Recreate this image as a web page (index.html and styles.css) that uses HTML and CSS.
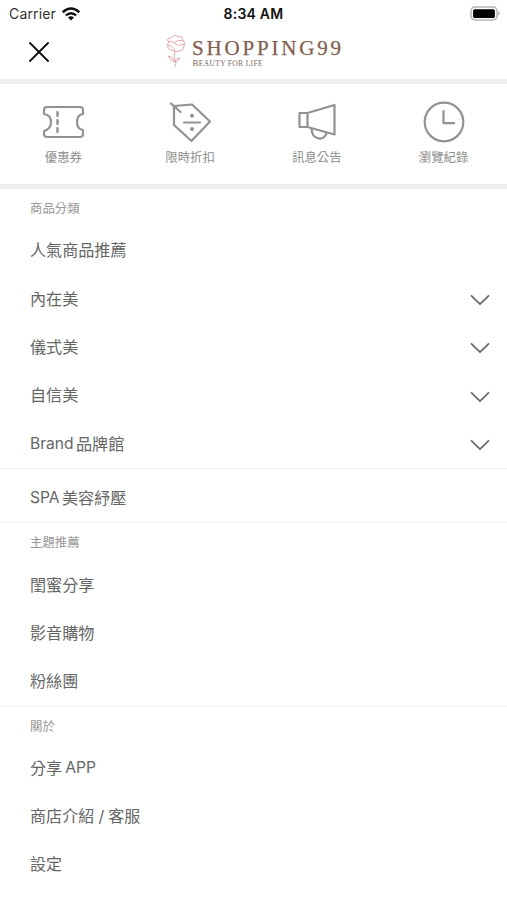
FILE: index.html
```html
<!DOCTYPE html>
<html lang="zh-Hant">
<head>
<meta charset="utf-8">
<title>SHOPPING99</title>
<link rel="stylesheet" href="styles.css">
</head>
<body>
<div class="status">
  <div class="carrier"><span>Carrier</span>
    <svg width="20" height="16" viewBox="0 0 20 16" fill="none" stroke="#111" stroke-width="2.5"><path d="M1.7 6.2Q10-1.2 18.3 6.2M4.9 9.4Q10 5 15.1 9.4"/><path d="M7 11.4Q10 8.9 13 11.4L10 14.4Z" fill="#111" stroke="none"/></svg>
  </div>
  <div class="time">8:34 AM</div>
  <svg class="battery" width="32" height="16" viewBox="0 0 32 16"><rect x="1" y="1.1" width="26" height="12.8" rx="3.8" fill="#fff" stroke="#b5b5b5" stroke-width="1.5"/><rect x="3.1" y="3.2" width="21.8" height="8.8" rx="1.5" fill="#000"/><path d="M28.4 5.3Q31 7.4 28.4 9.5Z" fill="#999"/></svg>
</div>
<header class="header">
  <svg class="close" width="20" height="20" viewBox="0 0 20 20" fill="none" stroke="#111" stroke-width="1.9" stroke-linecap="round"><path d="M1 1L19 19M19 1L1 19"/></svg>
  <svg class="logo" width="180" height="38" viewBox="0 0 180 38">
    <g fill="none" stroke="#e0a0a3" stroke-width=".9" stroke-linejoin="round" stroke-linecap="round">
      <path d="M3 8Q0 6 3 4Q6 5 7 2Q10 0 12 3Q17 1 16 5Q20 8 18 12Q18 16 14 17Q9 19 5 16Q1 15 2 11Q0 10 3 8Z"/>
      <path d="M3 8Q6 6 8 9Q12 5 17 7M2 11Q8 12 9 17M8 9Q12 13 18 10"/>
      <path d="M9 18Q7 22 9 26Q11 29 9 33M9 28Q7 23 2 22Q4 27 9 28M9 27Q10 24 14 24Q13 27 9 28"/>
    </g>
    <text class="logo-name" x="26" y="20.6" textLength="149">SHOPPING99</text>
    <text class="logo-tag" x="26.5" y="32" textLength="70"><tspan class="logo-cap">B</tspan>EAUTY FOR LIFE</text>
  </svg>
</header>
<nav class="shortcuts">
  <a class="shortcut"><svg width="44" height="44" viewBox="0 0 44 44"><path d="M6 7H39Q42 7 42 10V14Q36 15 36 22Q36 29 42 30V34Q42 37 39 37H6Q3 37 3 34V31Q10 29 10 22Q10 15 3 14V10Q3 7 6 7Z"/><path class="perforation" d="M16.5 12.5V15.5M16.5 20.5V23.5M16.5 28.5V31.5"/></svg><span>優惠券</span></a>
  <a class="shortcut"><svg width="44" height="44" viewBox="0 0 44 44"><path d="M6 6L24 4.5L42 21.5L23.5 41L6 25ZM3 3.5L12.5 12"/><path d="M16 22.5H32"/><g class="dots"><circle cx="24" cy="15.8" r="2"/><circle cx="24" cy="29" r="2"/></g></svg><span>限時折扣</span></a>
  <a class="shortcut"><svg width="44" height="44" viewBox="0 0 44 44"><path d="M4.5 13H12.5V27H4.5ZM12.5 13L39.5 5V34.5L12.5 27M16.5 28.5C17 41 30 41 31.5 33"/></svg><span>訊息公告</span></a>
  <a class="shortcut"><svg width="44" height="44" viewBox="0 0 44 44"><circle cx="22" cy="22" r="19.3"/><path d="M21.5 11V23.2H32"/></svg><span>瀏覽紀錄</span></a>
</nav>
<main class="menu">
  <section class="group">
    <h2 class="label">商品分類</h2>
    <a class="row">人氣商品推薦</a>
    <a class="row">內在美<svg class="chev" width="20" height="12" viewBox="0 0 20 12"><path d="M1 1.3L10 10L19 1.3"/></svg></a>
    <a class="row">儀式美<svg class="chev" width="20" height="12" viewBox="0 0 20 12"><path d="M1 1.3L10 10L19 1.3"/></svg></a>
    <a class="row">自信美<svg class="chev" width="20" height="12" viewBox="0 0 20 12"><path d="M1 1.3L10 10L19 1.3"/></svg></a>
    <a class="row"><span class="latin brand">Brand</span>品牌館<svg class="chev" width="20" height="12" viewBox="0 0 20 12"><path d="M1 1.3L10 10L19 1.3"/></svg></a>
  </section>
  <section class="group single">
    <a class="row"><span class="latin spa">SPA</span>美容紓壓</a>
  </section>
  <section class="group">
    <h2 class="label">主題推薦</h2>
    <a class="row">閨蜜分享</a>
    <a class="row">影音購物</a>
    <a class="row">粉絲團</a>
  </section>
  <section class="group">
    <h2 class="label">關於</h2>
    <a class="row">分享<span class="latin app">APP</span></a>
    <a class="row">商店介紹<span class="slash">/</span>客服</a>
    <a class="row">設定</a>
  </section>
</main>
</body>
</html>
```
FILE: styles.css
```css
* { box-sizing: border-box; }
body {
  margin: 0;
  height: 900px;
  overflow: hidden;
  background: #fff;
  color: #666;
  font-family: Inter, "Noto Sans CJK TC", sans-serif;
}
svg { display: block; flex: none; }
.status {
  display: grid;
  grid-template-columns: 1fr auto 1fr;
  align-items: center;
  height: 27px;
  padding: 0 5px 0 9px;
  color: #111;
  font-size: 14px;
  line-height: 27px;
}
.carrier { display: flex; align-items: center; gap: 5px; color: #333; letter-spacing: .15px; }
.time { font-weight: 600; font-size: 14px; letter-spacing: .22px; padding-right: 4px; }
.battery { justify-self: end; }
.header {
  display: flex;
  height: 57px;
  padding-left: 29px;
  border-bottom: 5px solid #eee;
}
.close { margin-top: 15px; }
.logo { margin: 7px 0 0 117px; overflow: visible; }
.logo-name { font-family: "Liberation Serif", serif; font-size: 21px; fill: #82604f; stroke: #82604f; stroke-width: .25; }
.logo-tag { font-family: "Liberation Serif", serif; font-size: 7.5px; fill: #82685b; }
.logo-cap { font-size: 9px; }
.shortcuts {
  display: grid;
  grid-template-columns: repeat(4, 1fr);
  height: 105px;
  padding-top: 16px;
  border-bottom: 5px solid #eee;
}
.shortcut {
  display: flex;
  flex-direction: column;
  align-items: center;
  gap: 4px;
  color: #8d8d8d;
  font-size: 12.4px;
  line-height: 20px;
}
.shortcut svg { fill: none; stroke: #929292; stroke-width: 2.2; stroke-linejoin: round; stroke-linecap: round; }
.shortcut .dots { fill: #929292; stroke: none; }
.shortcut .perforation { stroke-width: 2.5; stroke-linecap: square; }
.group { border-bottom: 1.5px solid #f4f4f4; padding-right: 17px; padding-left: 30px; }
.group:last-child { border-bottom: 0; }
.single { padding-top: 5px; }
.label {
  margin: 0;
  height: 37px;
  padding-top: 1px;
  font-size: 12.4px;
  font-weight: 400;
  line-height: 37px;
  color: #969696;
}
.row {
  display: flex;
  align-items: center;
  height: 48.4px;
  font-size: 16.1px;
  line-height: 24px;
}
.chev { margin: 3px 0 0 auto; fill: none; stroke: #666; stroke-width: 1.7; }
.latin { font-size: 15.6px; }
.brand { width: 46px; }
.spa { width: 32px; }
.app { margin-left: 3px; }
.slash { margin: 0 4px; }
```
